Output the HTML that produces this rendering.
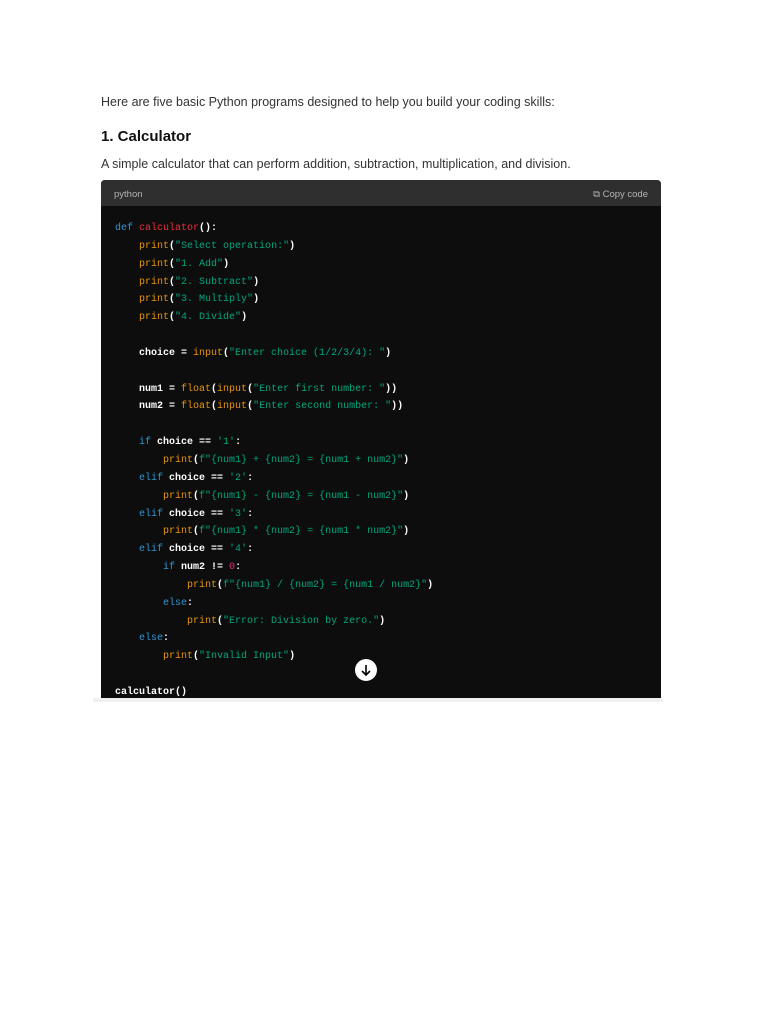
<!DOCTYPE html>
<html><head><meta charset="utf-8"><style>
body{margin:0;background:#fff;width:768px;height:1024px;position:relative;font-family:"Liberation Sans",sans-serif;}
.t{position:absolute;left:101px;color:#333;font-size:12.5px;white-space:nowrap}
.cb{position:absolute;left:101px;top:180px;width:560px;height:518px;background:#0d0d0d;border-radius:4px 4px 0 0;overflow:hidden}
.hd{height:26px;background:#2f2f2f;color:#b4b4b4;font-size:9.5px;line-height:29px;padding:0 13px;position:relative}
.hd span{position:absolute;right:13px;top:0}
pre{margin:0;position:absolute;left:14px;top:40px;font-family:"Liberation Mono",monospace;font-size:10px;line-height:17.85px;color:#fff;font-weight:bold}
.k{color:#2e95d3;font-weight:normal}.f{color:#f22c3d;font-weight:normal}.p{color:#e9950c;font-weight:normal}.s{color:#00a67d;font-weight:normal}.n{color:#df3079;font-weight:normal}
.btn{position:absolute;left:355px;top:659px;width:22px;height:22px;border-radius:50%;background:#fff;}
.sh{position:absolute;left:93px;top:698px;width:570px;height:4px;background:#f0f0f0}
</style></head><body>
<div class="t" style="top:95px">Here are five basic Python programs designed to help you build your coding skills:</div>
<div class="t" style="top:128px;font-size:15px;font-weight:bold;color:#111">1. Calculator</div>
<div class="t" style="top:157px">A simple calculator that can perform addition, subtraction, multiplication, and division.</div>
<div class="cb"><div class="hd">python<span>&#10697; Copy code</span></div>
<pre><span class="k">def</span> <span class="f">calculator</span>():
    <span class="p">print</span>(<span class="s">"Select operation:"</span>)
    <span class="p">print</span>(<span class="s">"1. Add"</span>)
    <span class="p">print</span>(<span class="s">"2. Subtract"</span>)
    <span class="p">print</span>(<span class="s">"3. Multiply"</span>)
    <span class="p">print</span>(<span class="s">"4. Divide"</span>)

    choice = <span class="p">input</span>(<span class="s">"Enter choice (1/2/3/4): "</span>)

    num1 = <span class="p">float</span>(<span class="p">input</span>(<span class="s">"Enter first number: "</span>))
    num2 = <span class="p">float</span>(<span class="p">input</span>(<span class="s">"Enter second number: "</span>))

    <span class="k">if</span> choice == <span class="s">'1'</span>:
        <span class="p">print</span>(<span class="s">f"{num1} + {num2} = {num1 + num2}"</span>)
    <span class="k">elif</span> choice == <span class="s">'2'</span>:
        <span class="p">print</span>(<span class="s">f"{num1} - {num2} = {num1 - num2}"</span>)
    <span class="k">elif</span> choice == <span class="s">'3'</span>:
        <span class="p">print</span>(<span class="s">f"{num1} * {num2} = {num1 * num2}"</span>)
    <span class="k">elif</span> choice == <span class="s">'4'</span>:
        <span class="k">if</span> num2 != <span class="n">0</span>:
            <span class="p">print</span>(<span class="s">f"{num1} / {num2} = {num1 / num2}"</span>)
        <span class="k">else</span>:
            <span class="p">print</span>(<span class="s">"Error: Division by zero."</span>)
    <span class="k">else</span>:
        <span class="p">print</span>(<span class="s">"Invalid Input"</span>)

calculator()</pre>
</div>
<div class="btn"><svg width="22" height="22" viewBox="0 0 22 22"><path d="M11 6v10M7 12l4 4 4-4" stroke="#000" stroke-width="1.6" fill="none"/></svg></div>
<div class="sh"></div>
</body></html>
